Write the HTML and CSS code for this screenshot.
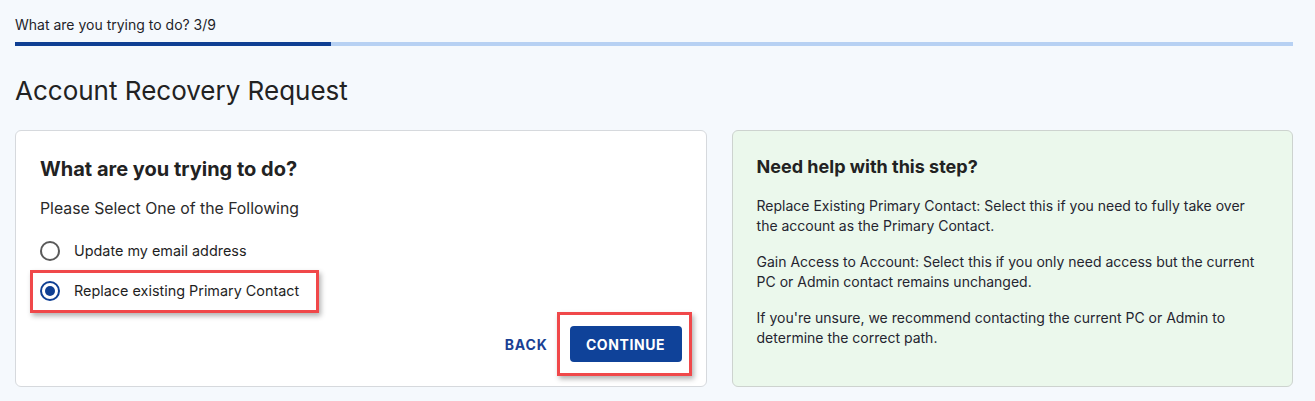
FILE: index.html
```html
<!DOCTYPE html>
<html lang="en">
<head>
<meta charset="utf-8">
<title>Account Recovery Request</title>
<link rel="stylesheet" href="styles.css">
</head>
<body>
<div class="page">
  <div class="progress">
    <div class="progress-label">What are you trying to do? 3/9</div>
    <div class="progress-track"><div class="progress-fill" style="width:24.75%"></div></div>
  </div>
  <h1 class="title">Account Recovery Request</h1>
  <div class="cards">
    <section class="card main-card">
      <h2 class="card-heading">What are you trying to do?</h2>
      <p class="prompt">Please Select One of the Following</p>
      <div class="options">
        <label class="option">
          <span class="radio"></span>
          <span class="option-text">Update my email address</span>
        </label>
        <label class="option option-highlight">
          <span class="radio radio-checked"></span>
          <span class="option-text">Replace existing Primary Contact</span>
        </label>
      </div>
      <div class="actions">
        <button class="btn-back" type="button">BACK</button>
        <button class="btn-continue" type="button">CONTINUE</button>
      </div>
    </section>
    <aside class="card help-card">
      <h3 class="help-heading">Need help with this step?</h3>
      <p class="help-text">Replace Existing Primary Contact: Select this if you need to fully take over the account as the Primary Contact.</p>
      <p class="help-text">Gain Access to Account: Select this if you only need access but the current PC or Admin contact remains unchanged.</p>
      <p class="help-text">If you're unsure, we recommend contacting the current PC or Admin to determine the correct path.</p>
    </aside>
  </div>
</div>
</body>
</html>
```

FILE: styles.css
```css
* { box-sizing: border-box; }

html, body {
  margin: 0;
  padding: 0;
  background: #f5f9fd;
  font-family: Inter, "Noto Sans", "Liberation Sans", sans-serif;
  color: #222;
}

.page {
  padding: 15px 22px 0 15px;
}

.progress-label {
  font-size: 14px;
  line-height: 20px;
  color: #1f1f2a;
}

.progress-track {
  margin-top: 7px;
  height: 4px;
  background: #b7d1f3;
}

.progress-fill {
  height: 100%;
  background: #0f3f93;
}

.title {
  margin: 28px 0 0;
  font-size: 26px;
  line-height: 34px;
  font-weight: 400;
  color: #222;
}

.cards {
  margin-top: 22px;
  display: grid;
  grid-template-columns: 691fr 561fr;
  gap: 25px;
}

.card {
  border: 1px solid #d6d9dd;
  border-radius: 6px;
  padding: 24px;
}

.main-card {
  background: #fff;
  display: flex;
  flex-direction: column;
}

.card-heading {
  margin: 0;
  font-size: 20px;
  line-height: 28px;
  font-weight: 700;
  color: #222;
}

.prompt {
  margin: 14px 0 0;
  font-size: 15.8px;
  line-height: 24px;
  color: #2a2a2a;
}

.options {
  margin: 11px 0 0 -10px;
  display: flex;
  flex-direction: column;
  align-items: flex-start;
  gap: 3px;
}

.option {
  position: relative;
  display: flex;
  align-items: center;
  gap: 14px;
  height: 37px;
  padding: 0 20px 0 10px;
  font-size: 14.4px;
  color: #1f1f1f;
}

.option-highlight::after {
  content: "";
  position: absolute;
  left: 0;
  right: 0;
  top: -2px;
  bottom: -4px;
  border: 3px solid #f0484a;
  box-shadow: 2px 3px 5px rgba(0, 0, 0, 0.3);
  pointer-events: none;
}

.radio {
  width: 20px;
  height: 20px;
  border-radius: 50%;
  border: 2px solid #5a5a5a;
  background: #fff;
  display: flex;
  align-items: center;
  justify-content: center;
  flex: none;
}

.radio-checked {
  border-color: #0f3f93;
}

.radio-checked::before {
  content: "";
  width: 10px;
  height: 10px;
  border-radius: 50%;
  background: #0f3f93;
}

.actions {
  margin-top: 17px;
  display: flex;
  justify-content: flex-end;
  align-items: center;
  gap: 22px;
}

.btn-back {
  border: none;
  background: none;
  padding: 0;
  font-family: inherit;
  font-size: 14px;
  font-weight: 700;
  letter-spacing: 0.8px;
  color: #1a3f94;
}

.btn-continue {
  position: relative;
  height: 36px;
  width: 112px;
  border: none;
  border-radius: 4px;
  background: #0f4299;
  color: #fff;
  font-family: inherit;
  font-size: 14px;
  font-weight: 700;
  letter-spacing: 0.6px;
}

.btn-continue::after {
  content: "";
  position: absolute;
  left: -13px;
  right: -10px;
  top: -14px;
  bottom: -14px;
  border: 3px solid #f0484a;
  box-shadow: 2px 3px 5px rgba(0, 0, 0, 0.3);
  pointer-events: none;
}

.help-card {
  background: #ebf8ec;
  border-color: #cdd3cf;
}

.help-heading {
  margin: 0;
  font-size: 18px;
  line-height: 24px;
  font-weight: 700;
  color: #222;
}

.help-text {
  margin: 17px 0 0;
  font-size: 14px;
  line-height: 20px;
  color: #252530;
}

.help-text + .help-text {
  margin-top: 16px;
}
```
